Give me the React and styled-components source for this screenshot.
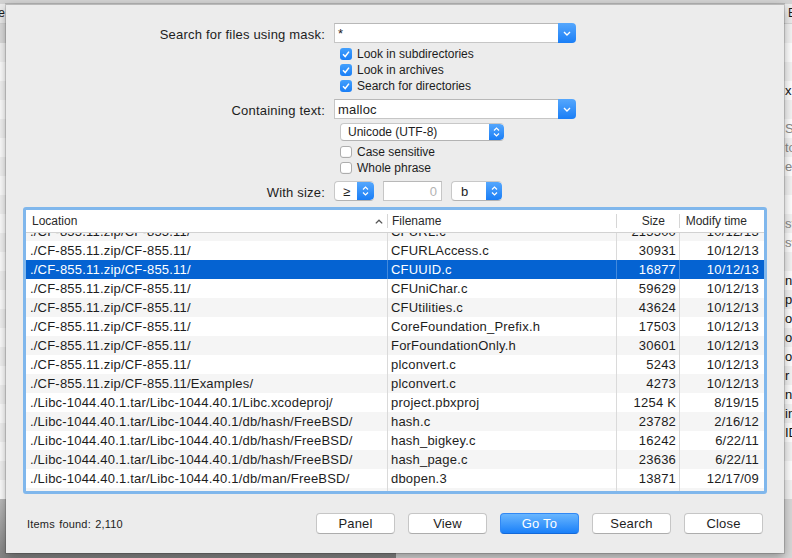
import React from "react";
import styled, { createGlobalStyle } from "styled-components";

const GlobalStyle = createGlobalStyle`
  html, body { margin: 0; padding: 0; }
  body {
    width: 792px;
    height: 558px;
    overflow: hidden;
    background: #cfcfcf;
    font-family: "Liberation Sans", Arial, sans-serif;
    color: #1d1d1d;
  }
`;

const Screen = styled.div`
  position: relative;
  width: 792px;
  height: 558px;
  overflow: hidden;
`;

/* background window (dual panel file manager behind the sheet) */
const BackWindow = styled.div`
  display: flex;
  width: 792px;
  height: 558px;
`;

const Pane = styled.div`
  width: 396px;
  display: flex;
  flex-direction: column;
  overflow: hidden;
`;

const TopStrip = styled.div`
  height: 4px;
  background: #d3d3d3;
`;

const BackHeader = styled.div`
  height: 19px;
  background: #ececec;
  border-bottom: 1px solid #d6d6d6;
  font-size: 12px;
  line-height: 19px;
  white-space: nowrap;
  text-indent: ${(p) => p.$indent}px;
`;

const BackRow = styled.div`
  height: 19px;
  line-height: 19px;
  font-size: 13px;
  white-space: nowrap;
  padding-left: ${(p) => p.$lead}px;
  background: ${(p) => (p.$sel ? "#dcdcdc" : p.$odd ? "#f4f4f4" : "#ffffff")};
  color: ${(p) => (p.$dim ? "#8a8a8a" : "#111")};
`;

const BackBottom = styled.div`
  flex: 1;
  background: ${(p) => (p.$dark ? "linear-gradient(#bdbdbd, #858585)" : "#d8d8d8")};
`;

/* sheet */
const Sheet = styled.div`
  position: absolute;
  left: 6px;
  top: 4px;
  width: 778px;
  height: 549px;
  box-sizing: border-box;
  background: #ececec;
  border-top: 1px solid #b9b9b9;
  box-shadow: 0 0 0 1px rgba(0, 0, 0, 0.14), 0 4px 10px rgba(0, 0, 0, 0.35);
  display: flex;
  flex-direction: column;
`;

const Form = styled.div`
  display: grid;
  grid-template-columns: 319px 1fr;
  column-gap: 9px;
  align-items: end;
  padding-top: 18px;
`;

const Label = styled.div`
  text-align: right;
  font-size: 13px;
  letter-spacing: 0.2px;
  height: 20px;
  line-height: 24px;
  white-space: nowrap;
`;

const Cell = styled.div`
  grid-column: 2;
  margin-top: ${(p) => p.$mt || 0}px;
  padding-left: ${(p) => p.$indent || 0}px;
  display: flex;
  flex-direction: ${(p) => (p.$column ? "column" : "row")};
  align-items: ${(p) => (p.$column ? "flex-start" : "center")};
  gap: ${(p) => p.$gap || 0}px;
`;

const Combo = styled.div`
  width: 242px;
  height: 20px;
  display: flex;
`;

const ComboInput = styled.div`
  flex: 1;
  box-sizing: border-box;
  background: #fff;
  border: 1px solid #c6c6c6;
  border-right: none;
  border-top-color: #b8b8b8;
  font-size: 13px;
  letter-spacing: 0.2px;
  line-height: 19px;
  padding-left: 3px;
`;

const BlueButton = styled.div`
  width: ${(p) => p.$w}px;
  height: 100%;
  box-sizing: border-box;
  background: linear-gradient(#55a7fd, #1a7ef6);
  border-radius: 0 4px 4px 0;
  display: flex;
  flex-direction: column;
  align-items: center;
  justify-content: center;
  gap: 2px;
`;

const CheckRow = styled.label`
  height: 16px;
  display: flex;
  align-items: center;
  gap: 5px;
  font-size: 12px;
  white-space: nowrap;
`;

const Box = styled.span`
  width: 12px;
  height: 12px;
  box-sizing: border-box;
  border-radius: 3px;
  display: flex;
  align-items: center;
  justify-content: center;
  background: ${(p) => (p.$on ? "linear-gradient(#43a0fd, #1a7ef6)" : "#fff")};
  border: ${(p) => (p.$on ? "none" : "1px solid #adadad")};
  box-shadow: ${(p) => (p.$on ? "none" : "inset 0 -1px 0 rgba(0,0,0,0.04)")};
`;

const Popup = styled.div`
  width: ${(p) => p.$w}px;
  height: ${(p) => p.$h}px;
  box-sizing: border-box;
  display: flex;
  background: #fff;
  border: 1px solid #c8c8c8;
  border-bottom-color: #b3b3b3;
  border-right: none;
  border-radius: 4px;
  overflow: hidden;
`;

const PopupText = styled.div`
  flex: 1;
  font-size: ${(p) => p.$fs}px;
  padding-left: ${(p) => p.$pad}px;
  display: flex;
  align-items: center;
  white-space: nowrap;
`;

const SizeInput = styled.div`
  width: 59px;
  height: 20px;
  box-sizing: border-box;
  background: #fff;
  border: 1px solid #c6c6c6;
  border-top-color: #b8b8b8;
  color: #b3b3b3;
  font-size: 13px;
  text-align: right;
  line-height: 19px;
  padding-right: 4px;
`;

/* results table */
const Table = styled.div`
  margin: 6px 0 0 17px;
  width: 744px;
  height: 287px;
  box-sizing: border-box;
  border: 3px solid #80b7ec;
  border-radius: 3px;
  background: #fff;
  display: flex;
  flex-direction: column;
  overflow: hidden;
`;

const Columns = "362px 229px 63px 1fr";

const Header = styled.div`
  display: grid;
  grid-template-columns: ${Columns};
  height: 23px;
  flex-shrink: 0;
  box-sizing: border-box;
  border-bottom: 1px solid #d2d2d2;
  font-size: 12px;
  color: #2a2a2a;
`;

const HeadCell = styled.div`
  margin: 4px 0;
  display: flex;
  align-items: center;
  justify-content: ${(p) => (p.$right ? "flex-end" : "space-between")};
  padding-left: ${(p) => p.$pl || 0}px;
  padding-right: ${(p) => p.$pr || 0}px;
  border-right: ${(p) => (p.$last ? "none" : "1px solid #d6d6d6")};
  white-space: nowrap;
`;

const Body = styled.div`
  flex: 1;
  overflow: hidden;
`;

const Scroller = styled.div`
  margin-top: -11px;
`;

const Row = styled.div`
  display: grid;
  grid-template-columns: ${Columns};
  height: 19px;
  font-size: 13px;
  letter-spacing: 0.2px;
  background: ${(p) => (p.$sel ? "#0563d2" : p.$stripe ? "#f5f5f5" : "#fff")};
  color: ${(p) => (p.$sel ? "#fff" : "#1d1d1d")};
`;

const Td = styled.div`
  line-height: 19px;
  white-space: nowrap;
  overflow: hidden;
  text-align: ${(p) => (p.$right ? "right" : "left")};
  padding-left: ${(p) => p.$pl || 0}px;
  padding-right: ${(p) => p.$pr || 0}px;
  border-right: ${(p) =>
    p.$last ? "none" : p.$sel ? "1px solid rgba(255,255,255,0.25)" : "1px solid #dadada"};
`;

/* footer */
const Footer = styled.div`
  margin-top: 19px;
  padding: 0 21px;
  display: flex;
  align-items: center;
  gap: 13px;
`;

const Count = styled.div`
  flex: 1;
  font-size: 11px;
  letter-spacing: 0.2px;
  word-spacing: 1px;
`;

const Button = styled.div`
  width: 79px;
  height: 21px;
  box-sizing: border-box;
  border-radius: 4px;
  display: flex;
  align-items: center;
  justify-content: center;
  font-size: 13px;
  letter-spacing: 0.2px;
  background: ${(p) => (p.$primary ? "linear-gradient(#69b6fe, #1a80f9)" : "#fff")};
  color: ${(p) => (p.$primary ? "#fff" : "#1d1d1d")};
  border: 1px solid ${(p) => (p.$primary ? "#3188f4" : "#c6c6c6")};
  border-bottom-color: ${(p) => (p.$primary ? "#1469d8" : "#adadad")};
`;

const ChevronDown = () => (
  <svg width="8" height="5" viewBox="0 0 8 5">
    <path d="M1 1 L4 4 L7 1" fill="none" stroke="#fff" strokeWidth="1.4" />
  </svg>
);

const Stepper = ({ w }) => (
  <BlueButton $w={w}>
    <svg width="7" height="4" viewBox="0 0 7 4">
      <path d="M1 3.5 L3.5 1 L6 3.5" fill="none" stroke="#fff" strokeWidth="1.2" />
    </svg>
    <svg width="7" height="4" viewBox="0 0 7 4">
      <path d="M1 0.5 L3.5 3 L6 0.5" fill="none" stroke="#fff" strokeWidth="1.2" />
    </svg>
  </BlueButton>
);

const Check = ({ on, children }) => (
  <CheckRow>
    <Box $on={on}>
      {on && (
        <svg width="10" height="10" viewBox="0 0 10 10">
          <path d="M2 5.3 L4.2 7.5 L8 2.6" fill="none" stroke="#fff" strokeWidth="1.5" />
        </svg>
      )}
    </Box>
    {children}
  </CheckRow>
);

const CF = "./CF-855.11.zip/CF-855.11/";
const LIBC = "./Libc-1044.40.1.tar/Libc-1044.40.1/";

const results = [
  [CF, "CFURL.c", "215500", "10/12/13"],
  [CF, "CFURLAccess.c", "30931", "10/12/13"],
  [CF, "CFUUID.c", "16877", "10/12/13"],
  [CF, "CFUniChar.c", "59629", "10/12/13"],
  [CF, "CFUtilities.c", "43624", "10/12/13"],
  [CF, "CoreFoundation_Prefix.h", "17503", "10/12/13"],
  [CF, "ForFoundationOnly.h", "30601", "10/12/13"],
  [CF, "plconvert.c", "5243", "10/12/13"],
  [CF + "Examples/", "plconvert.c", "4273", "10/12/13"],
  [LIBC + "Libc.xcodeproj/", "project.pbxproj", "1254 K", "8/19/15"],
  [LIBC + "db/hash/FreeBSD/", "hash.c", "23782", "2/16/12"],
  [LIBC + "db/hash/FreeBSD/", "hash_bigkey.c", "16242", "6/22/11"],
  [LIBC + "db/hash/FreeBSD/", "hash_page.c", "23636", "6/22/11"],
  [LIBC + "db/man/FreeBSD/", "dbopen.3", "13871", "12/17/09"],
  [LIBC + "db/man/FreeBSD/", "hash.3", "5920", "12/17/09"],
];

const SELECTED = 2;

const rightFragments = {
  3: "x '", 5: "Sh", 6: "to", 7: "ex", 10: "st", 11: "sw",
  13: "n", 14: "p", 15: "or", 16: "o", 17: "or", 18: "r", 19: "nc", 20: "in", 21: "ID",
};

const backRows = Array.from({ length: 25 }, (_, i) => i);

export default function App() {
  return (
    <Screen>
      <GlobalStyle />
      <BackWindow>
        <Pane>
          <TopStrip />
          <BackHeader $indent={-27}>Name</BackHeader>
          {backRows.map((i) => (
            <BackRow key={i} $lead={4} $sel={i === 0} $odd={i % 2 === 1} />
          ))}
          <BackBottom $dark />
        </Pane>
        <Pane>
          <TopStrip />
          <BackHeader $indent={392}>Ext</BackHeader>
          {backRows.map((i) => (
            <BackRow key={i} $lead={389} $odd={i % 2 === 0} $dim={i >= 5 && i <= 11}>
              {rightFragments[i] || ""}
            </BackRow>
          ))}
          <BackBottom />
        </Pane>
      </BackWindow>

      <Sheet>
        <Form>
          <Label>Search for files using mask:</Label>
          <Cell>
            <Combo>
              <ComboInput>*</ComboInput>
              <BlueButton $w={18}>
                <ChevronDown />
              </BlueButton>
            </Combo>
          </Cell>

          <Cell $mt={3} $indent={6} $column>
            <Check on>Look in subdirectories</Check>
            <Check on>Look in archives</Check>
            <Check on>Search for directories</Check>
          </Cell>

          <Label>Containing text:</Label>
          <Cell $mt={5}>
            <Combo>
              <ComboInput>malloc</ComboInput>
              <BlueButton $w={18}>
                <ChevronDown />
              </BlueButton>
            </Combo>
          </Cell>

          <Cell $mt={4} $indent={6}>
            <Popup $w={164} $h={18}>
              <PopupText $fs={12} $pad={7}>Unicode (UTF-8)</PopupText>
              <Stepper w={15} />
            </Popup>
          </Cell>

          <Cell $mt={3} $indent={6} $column>
            <Check>Case sensitive</Check>
            <Check>Whole phrase</Check>
          </Cell>

          <Label>With size:</Label>
          <Cell $mt={5} $gap={9}>
            <Popup $w={40} $h={20}>
              <PopupText $fs={13} $pad={8}>≥</PopupText>
              <Stepper w={17} />
            </Popup>
            <SizeInput>0</SizeInput>
            <Popup $w={51} $h={20}>
              <PopupText $fs={13} $pad={9}>b</PopupText>
              <Stepper w={16} />
            </Popup>
          </Cell>
        </Form>

        <Table>
          <Header>
            <HeadCell $pl={6} $pr={4}>
              <span>Location</span>
              <svg width="8" height="5" viewBox="0 0 8 5">
                <path d="M0.8 4.4 L4 1.2 L7.2 4.4" fill="none" stroke="#555" strokeWidth="1.3" />
              </svg>
            </HeadCell>
            <HeadCell $pl={4}>Filename</HeadCell>
            <HeadCell $right $pr={14}>Size</HeadCell>
            <HeadCell $right $pr={17} $last>Modify time</HeadCell>
          </Header>
          <Body>
            <Scroller>
              {results.map(([loc, name, size, date], i) => {
                const sel = i === SELECTED;
                return (
                  <Row key={i} $sel={sel} $stripe={i % 2 === 0}>
                    <Td $pl={4} $sel={sel}>{loc}</Td>
                    <Td $pl={3} $sel={sel}>{name}</Td>
                    <Td $right $pr={3} $sel={sel}>{size}</Td>
                    <Td $right $pr={5} $sel={sel} $last>{date}</Td>
                  </Row>
                );
              })}
            </Scroller>
          </Body>
        </Table>

        <Footer>
          <Count>Items found: 2,110</Count>
          <Button>Panel</Button>
          <Button>View</Button>
          <Button $primary>Go To</Button>
          <Button>Search</Button>
          <Button>Close</Button>
        </Footer>
      </Sheet>
    </Screen>
  );
}
